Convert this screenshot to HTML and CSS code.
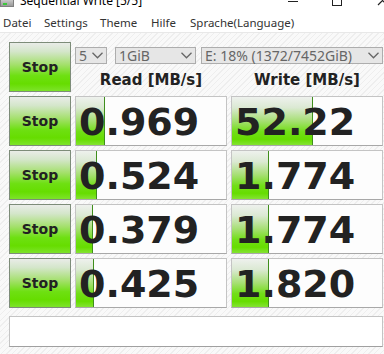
FILE: index.html
```html
<!DOCTYPE html>
<html lang="de">
<head>
    <meta charset="UTF-8">
    <title>Sequential Write [5/5]</title>
    <link rel="stylesheet" href="styles.css">
</head>
<body>
    <div class="titlebar">
        <div class="app-icon"><span class="led"></span></div>
        <div class="title">Sequential Write [5/5]</div>
        <div class="win-btns">
            <span class="win-min"></span>
            <span class="win-max"></span>
            <svg class="win-close" width="12" height="12" viewBox="0 0 12 12"><path d="M1 -4 L10 5 M1 5 L10 -4" stroke="#222" stroke-width="1.2" fill="none"/></svg>
        </div>
    </div>

    <div class="menubar">
        <span class="menu-item m-datei">Datei</span>
        <span class="menu-item m-settings">Settings</span>
        <span class="menu-item m-theme">Theme</span>
        <span class="menu-item m-hilfe">Hilfe</span>
        <span class="menu-item">Sprache(Language)</span>
    </div>

    <div class="main">
        <div class="grid">
            <button class="stop-btn">Stop</button>
            <div class="controls">
                <div class="selects">
                    <div class="select sel-count">5<svg class="chev" width="11" height="7" viewBox="0 0 11 7"><polyline points="0.5,0.8 5.5,5.8 10.5,0.8" fill="none" stroke="#666" stroke-width="1.3"/></svg></div>
                    <div class="select sel-size">1GiB<svg class="chev" width="11" height="7" viewBox="0 0 11 7"><polyline points="0.5,0.8 5.5,5.8 10.5,0.8" fill="none" stroke="#666" stroke-width="1.3"/></svg></div>
                    <div class="select sel-drive">E: 18% (1372/7452GiB)<svg class="chev" width="11" height="7" viewBox="0 0 11 7"><polyline points="0.5,0.8 5.5,5.8 10.5,0.8" fill="none" stroke="#666" stroke-width="1.3"/></svg></div>
                </div>
                <div class="headers">
                    <div class="head">Read [MB/s]</div>
                    <div class="head">Write [MB/s]</div>
                </div>
            </div>

            <button class="stop-btn">Stop</button>
            <div class="value"><div class="bar" style="width: 29px"></div><span class="num">0.969</span></div>
            <div class="value"><div class="bar" style="width: 81px"></div><span class="num">52.22</span></div>

            <button class="stop-btn">Stop</button>
            <div class="value"><div class="bar" style="width: 21px"></div><span class="num">0.524</span></div>
            <div class="value"><div class="bar" style="width: 37px"></div><span class="num">1.774</span></div>

            <button class="stop-btn">Stop</button>
            <div class="value"><div class="bar" style="width: 17px"></div><span class="num">0.379</span></div>
            <div class="value"><div class="bar" style="width: 37px"></div><span class="num">1.774</span></div>

            <button class="stop-btn">Stop</button>
            <div class="value"><div class="bar" style="width: 18px"></div><span class="num">0.425</span></div>
            <div class="value"><div class="bar" style="width: 37px"></div><span class="num">1.820</span></div>
        </div>

        <div class="comment"></div>
    </div>
</body>
</html>
```

FILE: styles.css
```css
body {
    margin: 0;
    width: 384px;
    height: 354px;
    overflow: hidden;
    font-family: 'Noto Sans', 'DejaVu Sans', sans-serif;
    background-color: #ffffff;
}

/* Fensterleiste, oben abgeschnitten */
.titlebar {
    height: 12px;
    overflow: hidden;
    display: flex;
    align-items: flex-end;
    position: relative;
    background-color: #ffffff;
}

.app-icon {
    width: 14px;
    height: 7px;
    margin-bottom: 5px;
    background: linear-gradient(#c8c8c8, #9a9a9a);
    border: 1px solid #808080;
    border-top: none;
    box-sizing: border-box;
    position: relative;
}

.led {
    position: absolute;
    left: 2px;
    bottom: 1px;
    width: 4px;
    height: 2px;
    background-color: #3cc83c;
}

.title {
    margin-left: 6px;
    font-size: 12px;
    line-height: 12px;
    color: #000;
    position: relative;
    top: -5px;
}

.win-btns {
    position: absolute;
    top: 0;
    right: 0;
    width: 110px;
    height: 12px;
}

.win-min {
    position: absolute;
    left: 14px;
    top: 1px;
    width: 10px;
    height: 1px;
    background-color: #222;
}

.win-max {
    position: absolute;
    left: 58px;
    top: -4px;
    width: 10px;
    height: 10px;
    border: 1px solid #222;
    box-sizing: border-box;
}

.win-close {
    position: absolute;
    left: 103px;
    top: 0;
}

/* Menü */
.menubar {
    height: 20px;
    display: flex;
    align-items: center;
    padding-left: 3px;
    font-size: 11.5px;
    color: #333;
    border-bottom: 1px solid #e8e8e8;
}

.m-datei {
    width: 41px;
}

.m-settings {
    width: 56px;
}

.m-theme {
    width: 51px;
}

.m-hilfe {
    width: 39px;
}

/* Hauptbereich */
.main {
    height: 321px;
    box-sizing: border-box;
    padding: 9px 1px 0 9px;
    background-color: #f7f7f7;
    background-image: repeating-linear-gradient(135deg, #f9f9f9 0px, #f9f9f9 3px, #eeeeee 3px, #eeeeee 4px);
}

.grid {
    display: grid;
    grid-template-columns: 62px 152px 152px;
    grid-auto-rows: 50px;
    column-gap: 4px;
    row-gap: 4px;
}

.stop-btn {
    width: 62px;
    height: 50px;
    padding: 0;
    border: 1px solid #7d8c79;
    background: linear-gradient(to bottom, #e9ece8 0%, #d4e6ca 18%, #a4e06c 45%, #6ee012 68%, #66dd00 85%, #7de32a 100%);
    font-family: 'DejaVu Sans', sans-serif;
    font-weight: bold;
    font-size: 14px;
    color: #222;
    cursor: pointer;
}

.controls {
    grid-column: 2 / 4;
    display: flex;
    flex-direction: column;
}

.selects {
    display: flex;
    margin-top: 5px;
    height: 17px;
}

.select {
    position: relative;
    box-sizing: border-box;
    height: 17px;
    padding-left: 3px;
    background-color: #e6e6e6;
    border: 1px solid #adadad;
    font-size: 14px;
    line-height: 15px;
    color: #666;
}

.sel-count {
    width: 32px;
}

.sel-size {
    width: 81px;
    margin-left: 8px;
}

.sel-drive {
    width: 182px;
    margin-left: 5px;
}

.chev {
    position: absolute;
    right: 3px;
    top: 4px;
}

.headers {
    display: flex;
    gap: 4px;
    margin-top: 8px;
}

.head {
    width: 152px;
    text-align: center;
    font-family: 'DejaVu Sans', sans-serif;
    font-weight: bold;
    font-size: 15px;
    line-height: 17px;
    color: #222;
}

.value {
    position: relative;
    display: flex;
    align-items: center;
    box-sizing: border-box;
    border: 1px solid #c4c4c4;
    border-bottom-color: #a8a8a8;
    background-color: #fdfdfd;
    overflow: hidden;
}

.bar {
    position: absolute;
    left: 0;
    top: 0;
    bottom: 0;
    box-sizing: border-box;
    border-right: 1px solid #3f8e1c;
    background: linear-gradient(to bottom, #eef1ed 0%, #dbe9d3 22%, #a6df73 50%, #72de18 72%, #66dd00 88%, #84e332 100%);
}

.num {
    position: relative;
    padding-left: 3px;
    font-family: 'DejaVu Sans', sans-serif;
    font-weight: bold;
    font-size: 38px;
    line-height: 40px;
    margin-top: 2px;
    color: #222;
}

.comment {
    margin-top: 8px;
    width: 374px;
    height: 31px;
    box-sizing: border-box;
    border: 1px solid #c4c4c4;
    border-bottom-color: #a0a0a0;
    background-color: #ffffff;
}
```
